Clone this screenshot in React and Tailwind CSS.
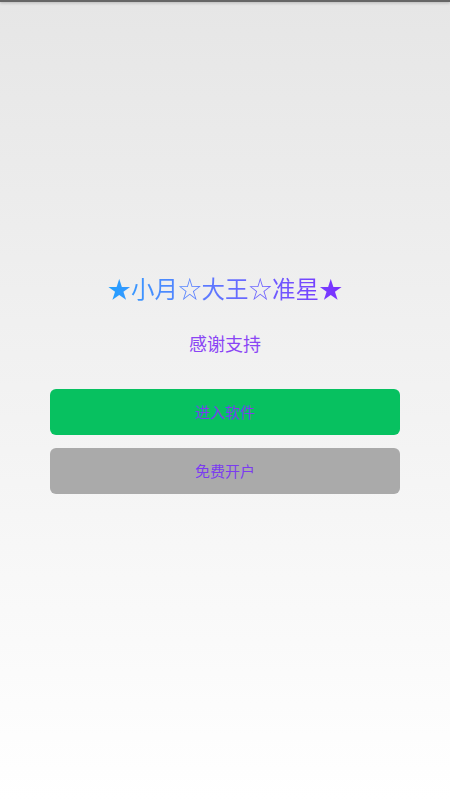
import React from "react";

function App() {
  return (
    <div
      className="relative flex h-[800px] w-[450px] flex-col items-center bg-gradient-to-b from-[#e6e6e6] to-[#ffffff] font-['Noto_Sans_CJK_SC','Noto_Sans',sans-serif]"
    >
      <div className="absolute left-0 right-0 top-0 h-[2px] bg-[#666666] shadow-[0_1px_3px_rgba(0,0,0,0.25)]" />

      <h1 className="mt-[271px] bg-gradient-to-r from-[#1ea0ff] to-[#7a2cff] bg-clip-text text-[23.5px] leading-[34px] text-transparent">
        ★小月☆大王☆准星★
      </h1>

      <div className="mt-[25px] text-[18px] leading-[26px] text-[#8a45f5]">
        感谢支持
      </div>

      <div className="mt-[33px] flex w-[350px] flex-col gap-[13px]">
        <button className="h-[46px] rounded-[6px] bg-[#07c160] text-[15px] text-[#7b3cf0]">
          进入软件
        </button>
        <button className="h-[46px] rounded-[6px] bg-[#aaaaaa] text-[15px] text-[#7b3cf0]">
          免费开户
        </button>
      </div>
    </div>
  );
}

export default App;
